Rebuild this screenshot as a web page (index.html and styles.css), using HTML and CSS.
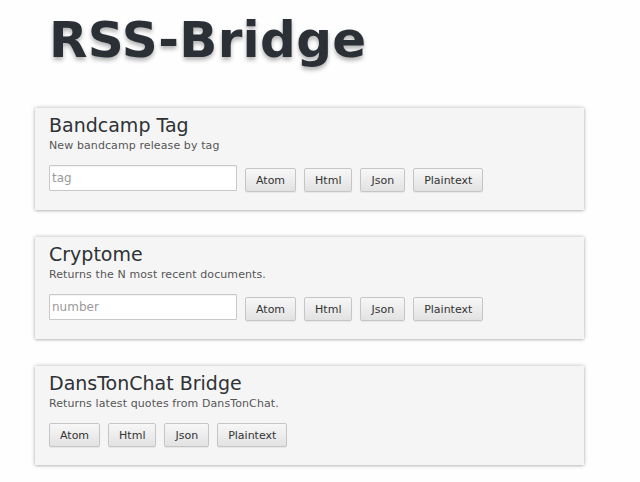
FILE: index.html
```html
<!DOCTYPE html>
<html>
<head>
<meta charset="utf-8">
<link rel="stylesheet" href="styles.css">
</head>
<body>
<div class="page">
  <h1 class="brand">RSS-Bridge</h1>
  <section class="bridge">
    <h2 class="bridge-name">Bandcamp Tag</h2>
    <p class="bridge-desc">New bandcamp release by tag</p>
    <form class="bridge-form">
      <input class="param" type="text" placeholder="tag">
      <button class="fmt" type="button">Atom</button>
      <button class="fmt" type="button">Html</button>
      <button class="fmt" type="button">Json</button>
      <button class="fmt" type="button">Plaintext</button>
    </form>
  </section>
  <section class="bridge">
    <h2 class="bridge-name">Cryptome</h2>
    <p class="bridge-desc">Returns the N most recent documents.</p>
    <form class="bridge-form">
      <input class="param" type="text" placeholder="number">
      <button class="fmt" type="button">Atom</button>
      <button class="fmt" type="button">Html</button>
      <button class="fmt" type="button">Json</button>
      <button class="fmt" type="button">Plaintext</button>
    </form>
  </section>
  <section class="bridge bridge-short">
    <h2 class="bridge-name">DansTonChat Bridge</h2>
    <p class="bridge-desc">Returns latest quotes from DansTonChat.</p>
    <form class="bridge-form">
      <button class="fmt" type="button">Atom</button>
      <button class="fmt" type="button">Html</button>
      <button class="fmt" type="button">Json</button>
      <button class="fmt" type="button">Plaintext</button>
    </form>
  </section>
</div>
</body>
</html>
```
FILE: styles.css
```css
html, body {
  margin: 0;
  padding: 0;
  background: #fefefe;
}
body {
  font-family: "DejaVu Sans", sans-serif;
  color: #333;
}
.page {
  padding: 0 0 0 35px;
  width: 549px;
}
.brand {
  margin: 10px 0 38px 14px;
  font-family: "DejaVu Sans", sans-serif;
  font-weight: bold;
  font-size: 50px;
  line-height: 60px;
  letter-spacing: 0.3px;
  color: #2b3036;
  text-shadow: 0 3px 4px rgba(0, 0, 0, 0.3);
}
.bridge {
  background: #f5f5f5;
  box-shadow: 0 0 4px rgba(0, 0, 0, 0.28), 0 1px 2px rgba(0, 0, 0, 0.12);
  padding: 6px 14px 18px 14px;
  margin-bottom: 27px;
}
.bridge-name {
  margin: 0;
  font-weight: normal;
  font-size: 19px;
  line-height: 22px;
  color: #2e3236;
}
.bridge-desc {
  margin: 3px 0 0 0;
  font-size: 11px;
  line-height: 13px;
  letter-spacing: 0.1px;
  color: #555;
}
.bridge-form {
  margin: 13px 0 0 0;
  display: flex;
  align-items: flex-start;
  gap: 8px;
}
.param {
  box-sizing: border-box;
  width: 188px;
  height: 26px;
  margin: 0;
  padding: 2px 2px;
  border: 1px solid #c8c8c8;
  border-radius: 1px;
  background: #fff;
  font-family: "DejaVu Sans", sans-serif;
  font-size: 12px;
  color: #333;
  box-shadow: inset 0 1px 1px rgba(0,0,0,0.05);
}
.param::placeholder {
  color: #9a9a9a;
}
.fmt {
  box-sizing: border-box;
  height: 24px;
  margin: 3px 0 0 0;
  padding: 0 10px;
  border: 1px solid #c6c6c6;
  border-radius: 2px;
  background: linear-gradient(#f7f7f7, #e2e2e2);
  font-family: "DejaVu Sans", sans-serif;
  font-size: 11px;
  color: #333;
  box-shadow: 0 1px 1px rgba(0,0,0,0.06);
}
.bridge-short .fmt {
  margin-top: 0;
}
```
